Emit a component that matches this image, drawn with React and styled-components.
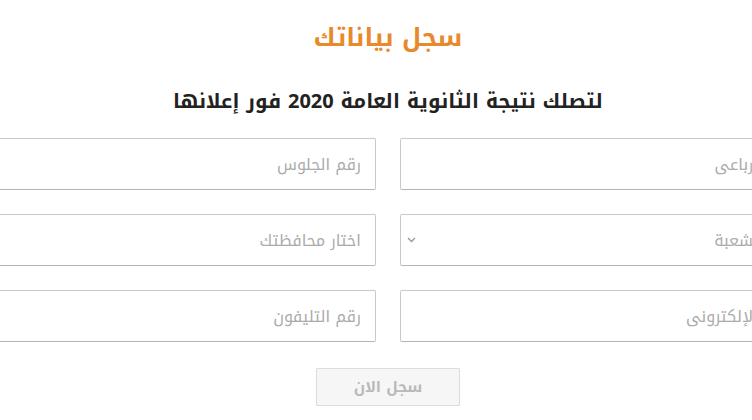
import React from "react";
import styled, { createGlobalStyle } from "styled-components";

const FIELD_WIDTH = "414px";
const COLUMN_GAP = "24px";

const GlobalStyle = createGlobalStyle`
  html, body {
    margin: 0;
    background: #ffffff;
    overflow: hidden;
  }
  body {
    font-family: "Noto Kufi Arabic", "Noto Sans Arabic", "DejaVu Sans", sans-serif;
  }
`;

const S = {
  Page: styled.div`
    direction: rtl;
    display: flex;
    flex-direction: column;
    align-items: center;
    width: 752px;
    height: 420px;
    padding-left: 24px;
    box-sizing: border-box;
    overflow: hidden;
  `,

  Title: styled.h2`
    margin: 20px 0 0;
    font-size: 25px;
    font-weight: 700;
    line-height: 36px;
    color: #e8892b;
  `,

  Subtitle: styled.h3`
    margin: 30px 0 0;
    font-size: 20px;
    font-weight: 700;
    line-height: 30px;
    color: #222222;
  `,

  Form: styled.form`
    display: grid;
    grid-template-columns: ${FIELD_WIDTH} ${FIELD_WIDTH};
    column-gap: ${COLUMN_GAP};
    row-gap: 24px;
    margin-top: 22px;
    flex-shrink: 0;
  `,

  FieldBox: styled.div`
    position: relative;
    height: 52px;
  `,

  Input: styled.input`
    width: 100%;
    height: 100%;
    box-sizing: border-box;
    border: 1px solid #c9c9c9;
    border-bottom-color: #b5b5b5;
    border-radius: 2px;
    padding: 0 14px;
    font-family: inherit;
    font-size: 16px;
    color: #333;
    background: #fff;
    direction: rtl;
    text-align: right;
    outline: none;

    &::placeholder {
      color: #ababab;
    }
  `,

  Select: styled.select`
    width: 100%;
    height: 100%;
    box-sizing: border-box;
    border: 1px solid #c9c9c9;
    border-bottom-color: #b5b5b5;
    border-radius: 2px;
    padding: 0 14px;
    font-family: inherit;
    font-size: 16px;
    color: #ababab;
    background: #fff;
    direction: rtl;
    appearance: none;
    outline: none;
  `,

  Chevron: styled.svg`
    position: absolute;
    left: 7px;
    top: 50%;
    margin-top: -3px;
    width: 9px;
    height: 6px;
    pointer-events: none;
  `,

  Actions: styled.div`
    display: flex;
    justify-content: center;
    margin-top: 26px;
  `,

  SubmitButton: styled.button`
    width: 144px;
    height: 38px;
    border: 1px solid #dcdcdc;
    border-radius: 1px;
    background: #f6f6f6;
    color: #b9b9b9;
    font-family: inherit;
    font-size: 15px;
    font-weight: 700;
    cursor: not-allowed;
  `,
};

function SelectField({ placeholder }) {
  return (
    <S.FieldBox>
      <S.Select defaultValue="">
        <option value="" disabled>
          {placeholder}
        </option>
      </S.Select>
      <S.Chevron viewBox="0 0 9 6" fill="none">
        <path d="M1 1l3.5 3.5L8 1" stroke="#9a9a9a" strokeWidth="1.4" />
      </S.Chevron>
    </S.FieldBox>
  );
}

function TextField({ placeholder, type = "text" }) {
  return (
    <S.FieldBox>
      <S.Input type={type} placeholder={placeholder} />
    </S.FieldBox>
  );
}

export default function App() {
  return (
    <>
      <GlobalStyle />
      <S.Page>
        <S.Title>سجل بياناتك</S.Title>
        <S.Subtitle>لتصلك نتيجة الثانوية العامة 2020 فور إعلانها</S.Subtitle>
        <S.Form onSubmit={(e) => e.preventDefault()}>
          <TextField placeholder="الاسم رباعى" />
          <TextField placeholder="رقم الجلوس" />
          <SelectField placeholder="اختار الشعبة" />
          <SelectField placeholder="اختار محافظتك" />
          <TextField placeholder="البريد الإلكترونى" type="email" />
          <TextField placeholder="رقم التليفون" type="tel" />
        </S.Form>
        <S.Actions>
          <S.SubmitButton type="submit" disabled>
            سجل الان
          </S.SubmitButton>
        </S.Actions>
      </S.Page>
    </>
  );
}
